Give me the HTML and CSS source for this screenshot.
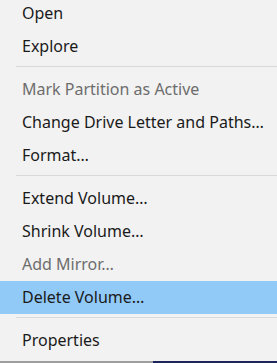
FILE: index.html
```html
<!DOCTYPE html>
<html lang="en">
<head>
    <meta charset="UTF-8">
    <meta name="viewport" content="width=device-width, initial-scale=1.0">
    <title>Volume Menu</title>
    <link rel="stylesheet" href="styles.css">
</head>
<body>

    <div class="page">
        <ul class="menu">
            <li class="item">Open</li>
            <li class="item">Explore</li>
            <li class="sep"></li>
            <li class="item disabled">Mark Partition as Active</li>
            <li class="item">Change Drive Letter and Paths…</li>
            <li class="item">Format…</li>
            <li class="sep"></li>
            <li class="item">Extend Volume…</li>
            <li class="item">Shrink Volume…</li>
            <li class="item disabled">Add Mirror…</li>
            <li class="item active">Delete Volume…</li>
            <li class="sep"></li>
            <li class="item">Properties</li>
        </ul>
        <!-- what shows below the menu edge -->
        <div class="under">
            <div class="under-left"></div>
            <div class="under-right"></div>
        </div>
    </div>

</body>
</html>
```

FILE: styles.css
```css
body { margin: 0; background: #f2f2f2; font-family: "Noto Sans", "Open Sans", sans-serif; overflow: hidden; }
.page { height: 363px; display: flex; flex-direction: column; }
.menu { list-style: none; margin: -3px 0 0 0; padding: 0; flex: 1; }
.item { height: 33px; line-height: 33px; padding-left: 22px; font-size: 16px; color: #1a1a1a; white-space: nowrap; }
.item.disabled { color: #6d6d6d; }
.item.active { background: #91c9f7; }
.sep { height: 1px; margin: 3px 0 6px 16px; background: #d9d9d9; }
.under { height: 2px; display: flex; }
.under-left { width: 153px; background: #9e9e9e; }
.under-right { flex: 1; background: #1c255a; }
```
